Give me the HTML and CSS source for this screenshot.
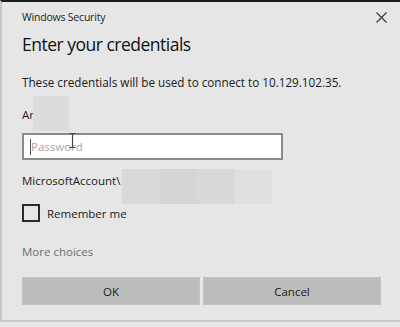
FILE: index.html
```html
<!DOCTYPE html>
<html lang="en">
<head>
    <meta charset="UTF-8">
    <title>Windows Security</title>
    <link rel="stylesheet" href="styles.css">
</head>
<body>
    <div class="ws-window">
        <div class="ws-titlebar">
            <span class="ws-title">Windows Security</span>
            <span class="ws-close">
                <svg width="11" height="11" viewBox="0 0 11 11">
                    <path d="M0.5 0.5 L10.5 10.5 M10.5 0.5 L0.5 10.5" stroke="#3a3a3a" stroke-width="1.2" fill="none"/>
                </svg>
            </span>
        </div>

        <h1 class="ws-heading">Enter your credentials</h1>
        <p class="ws-desc">These credentials will be used to connect to 10.129.102.35.</p>

        <div class="ws-row ws-user">
            Ar
            <span class="ws-blur ws-blur-user"></span>
        </div>

        <div class="ws-input">
            <span class="ws-caret"></span>
            <span class="ws-placeholder">Password</span>
            <svg class="ws-ibeam" width="7" height="15" viewBox="0 0 7 15">
                <path d="M0.5 0.5 H6.5 M3.5 0.5 V14.5 M0.5 14.5 H6.5" stroke="#444" stroke-width="1.2" fill="none"/>
            </svg>
        </div>

        <div class="ws-row ws-domain">
            MicrosoftAccount\
            <span class="ws-blur-group">
                <span class="ws-blur b1"></span>
                <span class="ws-blur b2"></span>
                <span class="ws-blur b3"></span>
                <span class="ws-blur b4"></span>
            </span>
        </div>

        <label class="ws-check">
            <span class="ws-box"></span>
            Remember me
        </label>

        <div class="ws-more">More choices</div>

        <div class="ws-buttons">
            <button class="ws-button">OK</button>
            <button class="ws-button">Cancel</button>
        </div>
    </div>
</body>
</html>
```

FILE: styles.css
```css
* {
    margin: 0;
    padding: 0;
    box-sizing: border-box;
}

body {
    font-family: 'Open Sans', 'Noto Sans', Arial, sans-serif;
    background: #e6e6e6;
    color: #1a1a1a;
    width: 400px;
    height: 327px;
    overflow: hidden;
}

.ws-window {
    height: 322px;
    border-top: 2px solid #1e1e1e;
    border-left: 2px solid #c6c6c6;
    border-bottom: 2px solid #c3cad1;
    background: #e6e6e6;
    padding-left: 20px;
    padding-right: 19px;
}

.ws-titlebar {
    height: 30px;
    display: flex;
    justify-content: space-between;
    align-items: center;
}

.ws-title {
    font-size: 10.5px;
    letter-spacing: -0.2px;
    color: #222;
}

.ws-close {
    display: flex;
    margin-right: -6px;
}

.ws-heading {
    font-size: 17.5px;
    letter-spacing: -0.5px;
    font-weight: 400;
    line-height: 24px;
    color: #111;
}

.ws-desc {
    margin-top: 16px;
    font-size: 11.7px;
    line-height: 20px;
}

.ws-row {
    position: relative;
    font-size: 11.5px;
    line-height: 20px;
}

.ws-user {
    margin-top: 13px;
}

.ws-blur {
    position: absolute;
    background: #dcdcdc;
}

.ws-blur-user {
    left: 11px;
    top: -9px;
    width: 36px;
    height: 35px;
}

.ws-input {
    position: relative;
    margin-top: 8px;
    width: 261px;
    height: 27px;
    background: #fff;
    border: 2px solid #8a8a8a;
    display: flex;
    align-items: center;
    padding-left: 6px;
}

.ws-caret {
    width: 1px;
    height: 16px;
    background: #555;
}

.ws-placeholder {
    font-size: 11.5px;
    color: #a6a6a6;
}

.ws-ibeam {
    position: absolute;
    left: 45px;
    top: -2px;
}

.ws-domain {
    margin-top: 11px;
}

.ws-blur-group {
    position: absolute;
    left: 100px;
    top: -2px;
    display: flex;
}

.ws-blur-group .ws-blur {
    position: static;
    width: 37.5px;
    height: 35px;
}

.ws-blur-group .b1 { background: #d9d9d9; }
.ws-blur-group .b2 { background: #d5d5d5; }
.ws-blur-group .b3 { background: #d8d8d8; }
.ws-blur-group .b4 { background: #e0e0e0; }

.ws-check {
    margin-top: 13px;
    display: flex;
    align-items: center;
    gap: 7px;
    font-size: 11.5px;
    height: 18px;
}

.ws-box {
    width: 18px;
    height: 18px;
    border: 2px solid #2a2a2a;
}

.ws-more {
    margin-top: 20px;
    font-size: 11.5px;
    line-height: 20px;
    color: #6e6e6e;
}

.ws-buttons {
    margin-top: 15px;
    display: grid;
    grid-template-columns: 1fr 1fr;
    gap: 3px;
}

.ws-button {
    height: 28px;
    background: #bcbcbc;
    border: 1px solid #c2c2c2;
    font-family: inherit;
    font-size: 11.5px;
    color: #1a1a1a;
}
```
